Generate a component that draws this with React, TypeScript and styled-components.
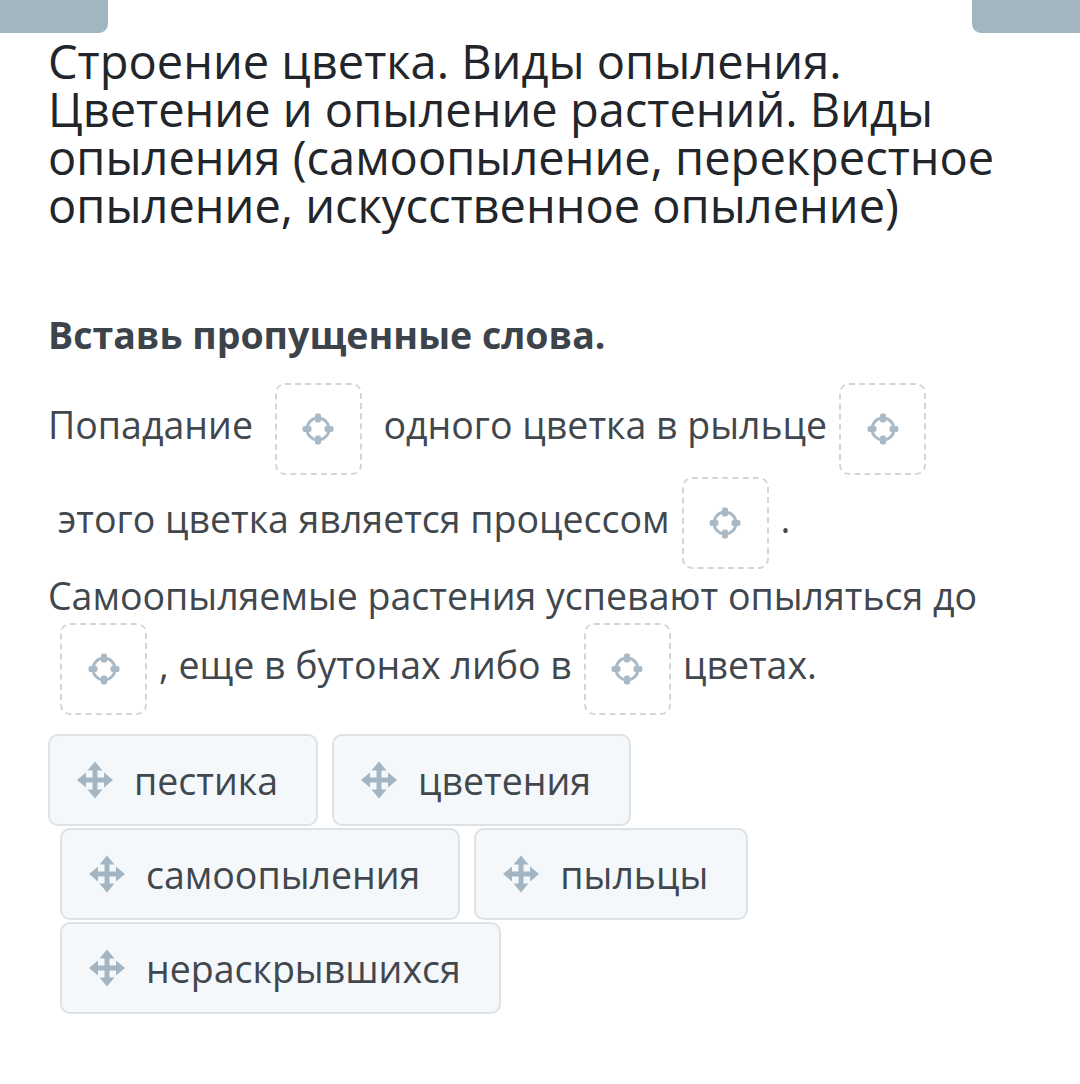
import styled, { createGlobalStyle } from 'styled-components'

const Global = createGlobalStyle`
	body {
		margin: 0;
		background: #fff;
		font-family: 'Open Sans', 'Noto Sans', sans-serif;
	}
`

const Page = styled.div`
	width: 1080px;
	min-height: 1084px;
	background: #fff;
`

const TopBar = styled.div`
	display: flex;
	justify-content: space-between;
	height: 33px;
`

const Tab = styled.div<{ $side: 'left' | 'right' }>`
	width: 108px;
	height: 33px;
	background: #a2b6c2;
	border-radius: ${(p) => (p.$side === 'left' ? '0 0 9px 0' : '0 0 0 9px')};
`

const Content = styled.main`
	padding: 0 48px;
`

const Title = styled.h1`
	margin: 4px 0 0;
	max-width: 970px;
	font-size: 47px;
	line-height: 48px;
	font-weight: 400;
	color: #222529;
`

const Task = styled.h2`
	margin: 82px 0 0;
	font-size: 37.5px;
	line-height: 48px;
	font-weight: 700;
	color: #3d434a;
`

const Text = styled.div`
	margin-top: 23px;
	font-size: 37.5px;
	line-height: 52px;
	color: #41474d;
`

const Drop = styled.span`
	display: inline-flex;
	align-items: center;
	justify-content: center;
	width: 87px;
	height: 92px;
	margin: 1px 12px;
	box-sizing: border-box;
	border: 2px dashed #d3d6d9;
	border-radius: 10px;
	vertical-align: middle;
`

const Words = styled.div`
	margin-top: 18px;
	display: flex;
	flex-direction: column;
	gap: 2px;
`

const WordRow = styled.div<{ $indent: number }>`
	display: flex;
	gap: 14px;
	padding-left: ${(p) => p.$indent}px;
`

const Chip = styled.div`
	display: flex;
	align-items: center;
	gap: 21px;
	height: 92px;
	box-sizing: border-box;
	padding: 0 38px 0 27px;
	background: #f4f8fb;
	border: 2px solid #dde2e6;
	border-radius: 10px;
	font-size: 37.5px;
	color: #41474d;
`

const Target = () => (
	<svg width="32" height="32" viewBox="0 0 32 32" fill="none">
		<circle cx="16" cy="16" r="11" stroke="#a9bac6" strokeWidth="3" />
		<g fill="#a9bac6">
			<rect x="13" y="0.5" width="6" height="9" rx="2" />
			<rect x="13" y="22.5" width="6" height="9" rx="2" />
			<rect x="0.5" y="13" width="9" height="6" rx="2" />
			<rect x="22.5" y="13" width="9" height="6" rx="2" />
		</g>
	</svg>
)

const Move = () => (
	<svg width="36" height="38" viewBox="0 0 36 38" fill="#a3b5c2">
		<rect x="15.5" y="8" width="5" height="22" />
		<rect x="7" y="16.5" width="22" height="5" />
		<path d="M18 0.5 L25.5 9.5 L10.5 9.5 Z" />
		<path d="M18 37.5 L25.5 28.5 L10.5 28.5 Z" />
		<path d="M0 19 L9 11.5 L9 26.5 Z" />
		<path d="M36 19 L27 11.5 L27 26.5 Z" />
	</svg>
)

const rows = [
	{ indent: 0, words: ['пестика', 'цветения'] },
	{ indent: 12, words: ['самоопыления', 'пыльцы'] },
	{ indent: 12, words: ['нераскрывшихся'] },
]

const Box = () => (
	<Drop>
		<Target />
	</Drop>
)

export default function App() {
	return (
		<Page>
			<Global />
			<TopBar>
				<Tab $side="left" />
				<Tab $side="right" />
			</TopBar>
			<Content>
				<Title>
					Строение цветка. Виды опыления. Цветение и опыление растений. Виды опыления
					(самоопыление, перекрестное опыление, искусственное опыление)
				</Title>
				<Task>Вставь пропущенные слова.</Task>
				<Text>
					Попадание <Box /> одного цветка в рыльце<Box />
					<br />
					{'\u00a0'}этого цветка является процессом<Box />.
					<br />
					Самоопыляемые растения успевают опыляться до
					<br />
					<Box />, еще в бутонах либо в<Box />цветах.
				</Text>
				<Words>
					{rows.map((r, i) => (
						<WordRow key={i} $indent={r.indent}>
							{r.words.map((w) => (
								<Chip key={w}>
									<Move />
									{w}
								</Chip>
							))}
						</WordRow>
					))}
				</Words>
			</Content>
		</Page>
	)
}
